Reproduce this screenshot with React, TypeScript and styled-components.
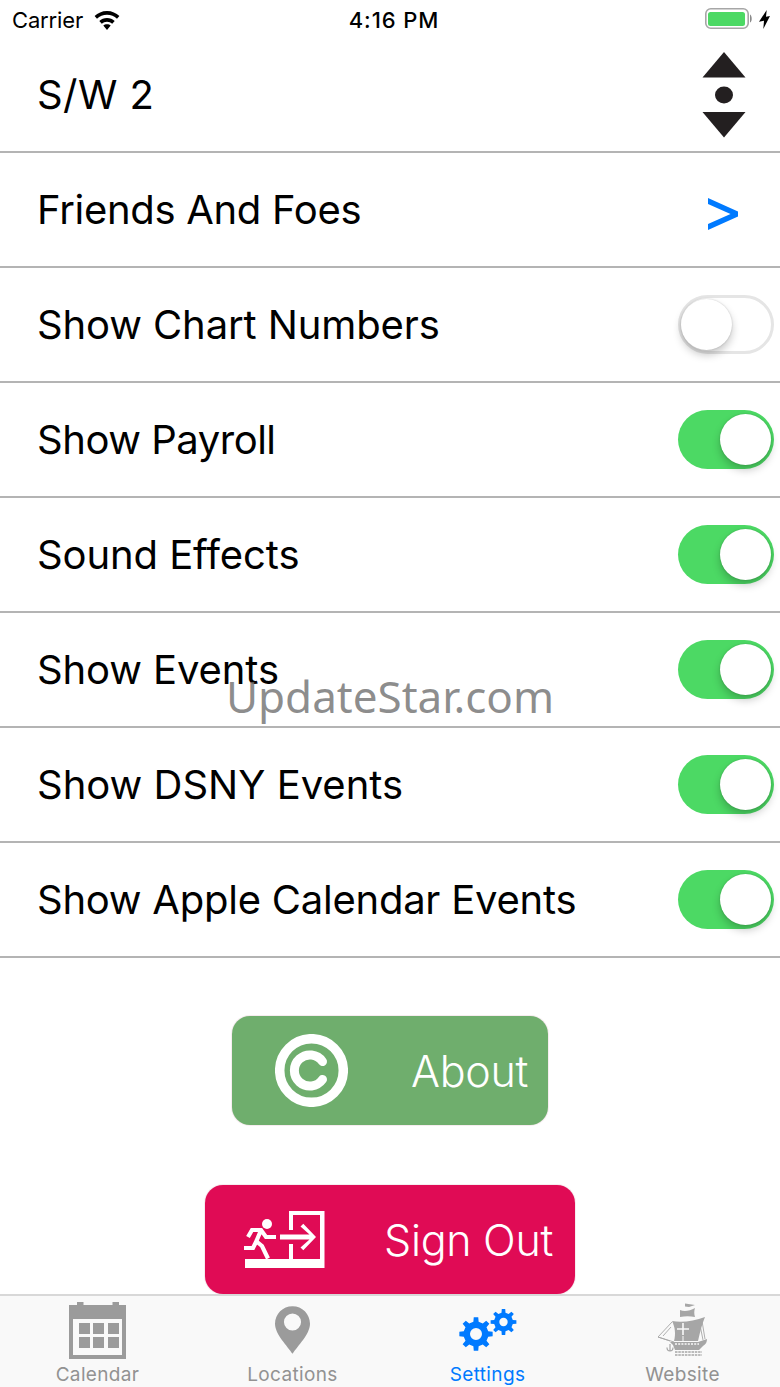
import React from "react";
import styled, { createGlobalStyle } from "styled-components";

const Global = createGlobalStyle`
  html, body { margin: 0; padding: 0; background: #fff; }
  body { font-family: Inter, "Liberation Sans", sans-serif; }
`;

const Page = styled.div`
  position: relative;
  width: 780px;
  height: 1387px;
  overflow: hidden;
  background: #fff;
  display: flex;
  flex-direction: column;
`;

const StatusBar = styled.div`
  height: 40px;
  padding: 0 9px 0 12px;
  display: grid;
  grid-template-columns: 1fr auto 1fr;
  align-items: center;
  color: #000;
`;
const StatusLeft = styled.div`
  display: flex;
  align-items: center;
  gap: 11px;
  font-size: 22px;
  letter-spacing: -0.15px;
`;
const StatusTime = styled.div`
  font-size: 22px;
  font-weight: 500;
  letter-spacing: 0.9px;
  margin-left: 5px;
`;
const StatusRight = styled.div`
  display: flex;
  justify-content: flex-end;
  align-items: center;
  margin-top: -2px;
`;

const Row = styled.div`
  box-sizing: border-box;
  height: 115px;
  padding: 0 6px 0 37px;
  display: flex;
  align-items: center;
  justify-content: space-between;
  border-bottom: 2px solid #b4b4b4;
`;
const HeaderRow = styled(Row)`
  height: 113px;
  padding: 0 34px 2px 37px;
`;
const RowLabel = styled.span<{ $track: number }>`
  font-size: 40px;
  letter-spacing: ${(p) => p.$track}px;
  color: #000;
`;
const Chevron = styled.span`
  display: flex;
  margin: 8px 35px 0 0;
`;

const Toggle = styled.div<{ $on: boolean }>`
  box-sizing: border-box;
  position: relative;
  width: 96px;
  height: 59px;
  border-radius: 30px;
  background: ${(p) => (p.$on ? "#4cd964" : "#fff")};
  border: ${(p) => (p.$on ? "none" : "3px solid #e5e5e5")};
`;
const Knob = styled.div<{ $on: boolean }>`
  position: absolute;
  width: 51px;
  height: 51px;
  border-radius: 50%;
  background: #fff;
  top: ${(p) => (p.$on ? "4px" : "1px")};
  ${(p) => (p.$on ? "right: 3px;" : "left: 0;")}
  box-shadow: 0 5px 8px rgba(0, 0, 0, 0.22), 0 0 2px rgba(0, 0, 0, 0.2);
`;

const Buttons = styled.div`
  flex: 1;
  display: flex;
  flex-direction: column;
  align-items: center;
  padding-top: 58px;
  gap: 60px;
`;
const ActionButton = styled.div<{ $wide?: boolean; $color: string }>`
  box-sizing: border-box;
  width: ${(p) => (p.$wide ? "370px" : "316px")};
  height: 109px;
  flex: none;
  border-radius: 18px;
  background: ${(p) => p.$color};
  box-shadow: 0 0 0 1px rgba(230, 200, 210, 0.35);
  display: flex;
  align-items: center;
  justify-content: space-between;
  padding: ${(p) => (p.$wide ? "0 22px 0 39px" : "0 20px 0 43px")};
  color: #fff;
  font-size: 43px;
  font-weight: 300;
  letter-spacing: -0.3px;
`;

const TabBar = styled.div`
  box-sizing: border-box;
  height: 93px;
  flex: none;
  background: #f9f9f9;
  border-top: 2px solid #d8d8d8;
  display: grid;
  grid-template-columns: repeat(4, 1fr);
  margin-top: -1px;
  position: relative;
`;
const Tab = styled.div<{ $active?: boolean }>`
  position: relative;
  display: flex;
  flex-direction: column;
  align-items: center;
  color: ${(p) => (p.$active ? "#007aff" : "#929292")};
  font-size: 19px;
  letter-spacing: 0.35px;
`;
const TabIcon = styled.div<{ $top: number }>`
  box-sizing: border-box;
  height: 67px;
  padding-top: ${(p) => p.$top}px;
  display: flex;
  align-items: flex-start;
  justify-content: center;
`;
const TabLabel = styled.span`
  line-height: 24px;
`;

const Watermark = styled.div`
  position: absolute;
  left: 0;
  right: 0;
  top: 667px;
  text-align: center;
  font-family: "Noto Sans", "Open Sans", sans-serif;
  font-size: 44px;
  line-height: 58px;
  color: rgba(110, 110, 110, 0.78);
  pointer-events: none;
`;

const Wifi = () => (
  <svg width="26" height="19" viewBox="0 0 26 19" fill="#000">
    <path d="M13 0C8 0 3.800 2 .6 5l2.400 2.700C5.700 5.200 9.100 3.800 13 3.800s7.300 1.400 10 3.900L25.400 5C22.200 2 18 0 13 0z" />
    <path d="M13 7c-3 0-5.700 1.200-7.700 3l2.500 2.700c1.400-1.200 3.200-2 5.200-2s3.800.8 5.200 2l2.500-2.700c-2-1.800-4.700-3-7.700-3z" />
    <path d="M13 13.200c-1.500 0-2.800.5-3.700 1.400L13 19l3.700-4.400c-.9-.9-2.200-1.400-3.700-1.400z" />
  </svg>
);

const Battery = () => (
  <svg width="66" height="22" viewBox="0 0 66 22">
    <rect x=".8" y=".8" width="42.400" height="19.400" rx="5" fill="#fff" stroke="#a6a6a6" strokeWidth="1.600" />
    <rect x="3" y="4" width="37" height="14" rx="2.500" fill="#4cd964" />
    <path d="M45 6.500c2 .5 2.500 7.500 0 8z" fill="#8a8a8a" />
    <path d="M61.700 2 54 13.700l5-1L58.300 21 65 8l-4 .7z" fill="#000" />
  </svg>
);

const Sorter = () => (
  <svg width="44" height="86" viewBox="0 0 44 86" fill="#231f20">
    <path d="M22 0 43.500 25.500H.5z" />
    <ellipse cx="22" cy="43" rx="9" ry="8.500" />
    <path d="M.5 60h43L22 85.500z" />
  </svg>
);

const ChevronIcon = () => (
  <svg width="32" height="32" viewBox="0 0 32 32" fill="#007aff">
    <path d="M1 0l30 13.500v5L1 32v-6l22.500-10L1 6z" />
  </svg>
);

const CopyrightIcon = () => (
  <svg width="73" height="73" viewBox="0 0 73 73" fill="none" stroke="#fff">
    <circle cx="36.500" cy="36.500" r="31.800" strokeWidth="9.500" />
    <path d="M47.500 27.500a15.500 15.500 0 1 0 0 18" strokeWidth="9" strokeLinecap="round" />
  </svg>
);

const ExitIcon = () => (
  <svg width="81" height="57" viewBox="0 0 81 57" fill="none">
    <circle cx="23" cy="13" r="5" fill="#fff" />
    <path fill="#fff" d="M45 0h35.500v57H1v-9h44V33h4v15h27V4H49v15h-4z" />
    <path fill="#fff" d="M36 23.500h29.500l-9-8 2.800-2.800L72 26 59.300 39.300l-2.800-2.800 9-8H36z" />
    <path
      stroke="#fff"
      strokeWidth="4.200"
      d="M4 26l4-7h9l5 7h10M17.500 18l-5.500 13M12 30l6 5 6 12.500M12.500 30l-3.500 7H0"
    />
  </svg>
);

const CalendarIcon = () => (
  <svg width="57" height="57" viewBox="0 0 57 57" fill="#9b9b9b">
    <path fillRule="evenodd" d="M8 0h6.500v3h29V0H50v3h7v54H0V3h8zM4 17v36h49V17z" />
    {[10, 24, 39].flatMap((x) =>
      [21, 35].map((y) => <rect key={`${x}-${y}`} x={x} y={y} width="11" height="11" />),
    )}
  </svg>
);

const PinIcon = () => (
  <svg width="35" height="50" viewBox="0 0 36 49">
    <path
      fillRule="evenodd"
      fill="#9b9b9b"
      d="M18 0C8 0 0 8 0 18c0 11 13 23 18 31 5-8 18-20 18-31C36 8 28 0 18 0zm0 7.500a8.800 8.800 0 1 1 0 17.600A8.800 8.800 0 0 1 18 7.500z"
    />
  </svg>
);

function gearPath(cx: number, cy: number, outer: number, inner: number, hole: number, teeth: number): string {
  const pts: string[] = [];
  const step = (Math.PI * 2) / teeth;
  for (let i = 0; i < teeth; i++) {
    const a = i * step - Math.PI / 2;
    const w = step * 0.17;
    const v = step * 0.27;
    const p = (r: number, t: number) => `${(cx + r * Math.cos(t)).toFixed(2)} ${(cy + r * Math.sin(t)).toFixed(2)}`;
    pts.push(p(inner, a - v), p(outer, a - w), p(outer, a + w), p(inner, a + v));
  }
  return `M${pts.join("L")}Z M${cx + hole} ${cy}a${hole} ${hole} 0 1 0 ${-2 * hole} 0a${hole} ${hole} 0 1 0 ${2 * hole} 0z`;
}

const GearsIcon = () => (
  <svg width="58" height="43" viewBox="0 0 58 43" fill="#007aff">
    <path fillRule="evenodd" d={gearPath(17, 26, 16.800, 12.500, 6, 8)} />
    <path fillRule="evenodd" d={gearPath(44.500, 14, 13, 9.500, 4.200, 8)} />
  </svg>
);

const ShipIcon = () => (
  <svg width="49" height="53" viewBox="0 0 49 53" fill="#a6a6a6">
    <path d="M27 .5l10 1.500-6 2-4-.5z" />
    <path d="M22 7c4 2 10 1 15-2-1 3-1 6 0 9-5-1-10-1-15 0z" />
    <path d="M14 18c10 2 22 0 33-4-3 7-5 15-7 24H16c2-7 1-14-2-20z" />
    <path d="M14 19 0 34l12 4M5 33l8-9M0 34l16 5M41 17l4 20M44 18l3 18" fill="none" stroke="#a6a6a6" strokeWidth=".9" />
    <path d="M12 39h28l9-3c0 3-1 5-4 7l-4 4H17l-2-5z" />
    <path d="M17 41h24" stroke="#f9f9f9" strokeWidth="1.400" strokeDasharray="2 1.200" />
    <path d="M17 49h27M17 52h27" stroke="#a6a6a6" strokeWidth="1.600" strokeDasharray="2.500 .8" fill="none" />
    <path d="M12 41v7M9 44.500c0 2 1 3.500 3 3.500s3-1.500 3-3.500" fill="none" stroke="#a6a6a6" strokeWidth="1.200" />
    <path d="M24.200 20h1.600v5.200H31v1.600h-5.200V32h-1.600v-5.200H19v-1.600h5.200z" fill="#f9f9f9" />
    <path d="M25 33v6" stroke="#f9f9f9" strokeWidth="1" />
  </svg>
);

const rows: { label: string; on: boolean; track: number }[] = [
  { label: "Show Chart Numbers", on: false, track: -0.11 },
  { label: "Show Payroll", on: true, track: -0.47 },
  { label: "Sound Effects", on: true, track: -0.09 },
  { label: "Show Events", on: true, track: -0.1 },
  { label: "Show DSNY Events", on: true, track: 0 },
  { label: "Show Apple Calendar Events", on: true, track: -0.24 },
];

export default function App() {
  return (
    <Page>
      <Global />
      <StatusBar>
        <StatusLeft>
          Carrier <Wifi />
        </StatusLeft>
        <StatusTime>4:16 PM</StatusTime>
        <StatusRight>
          <Battery />
        </StatusRight>
      </StatusBar>
      <HeaderRow>
        <RowLabel $track={0.45}>S/W 2</RowLabel>
        <Sorter />
      </HeaderRow>
      <Row>
        <RowLabel $track={-0.3}>Friends And Foes</RowLabel>
        <Chevron>
          <ChevronIcon />
        </Chevron>
      </Row>
      {rows.map((t) => (
        <Row key={t.label}>
          <RowLabel $track={t.track}>{t.label}</RowLabel>
          <Toggle $on={t.on}>
            <Knob $on={t.on} />
          </Toggle>
        </Row>
      ))}
      <Buttons>
        <ActionButton $color="#6fae6d">
          <CopyrightIcon />
          <span>About</span>
        </ActionButton>
        <ActionButton $wide $color="#e00b55">
          <ExitIcon />
          <span>Sign Out</span>
        </ActionButton>
      </Buttons>
      <TabBar>
        <Tab>
          <TabIcon $top={6}>
            <CalendarIcon />
          </TabIcon>
          <TabLabel>Calendar</TabLabel>
        </Tab>
        <Tab>
          <TabIcon $top={9}>
            <PinIcon />
          </TabIcon>
          <TabLabel>Locations</TabLabel>
        </Tab>
        <Tab $active>
          <TabIcon $top={12}>
            <GearsIcon />
          </TabIcon>
          <TabLabel>Settings</TabLabel>
        </Tab>
        <Tab>
          <TabIcon $top={7}>
            <ShipIcon />
          </TabIcon>
          <TabLabel>Website</TabLabel>
        </Tab>
      </TabBar>
      <Watermark>UpdateStar.com</Watermark>
    </Page>
  );
}
